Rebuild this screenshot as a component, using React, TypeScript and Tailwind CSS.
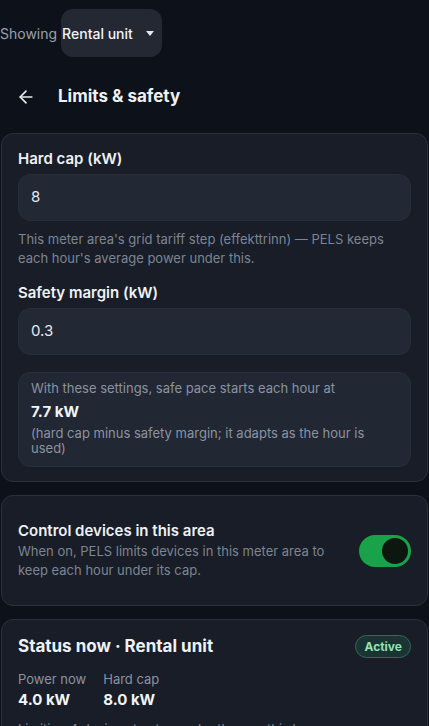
import { ArrowLeft } from 'lucide-react';

function Field({ label, value }: { label: string; value: string }) {
  return (
    <div className="flex flex-col gap-[5px]">
      <label className="text-[15px] font-semibold text-[#eef1f6] leading-5">{label}</label>
      <div className="h-[47px] rounded-xl bg-[#222834] border border-[#272d39] px-3 flex items-center text-[15px] text-[#e6e9ef]">
        {value}
      </div>
    </div>
  );
}

export default function App() {
  return (
    <div
      className="min-h-screen bg-[#0d111a] text-white pb-10"
      style={{ fontFamily: 'Inter, "Noto Sans", sans-serif' }}
    >
      {/* top selector */}
      <div className="flex items-center gap-1 pt-[9px]">
        <span className="text-[14px] text-[#9aa1ad]">Showing</span>
        <button className="h-12 w-[101px] rounded-xl bg-[#232833] flex items-center justify-between pl-[1px] pr-[8px] text-[14px] font-medium text-[#f1f3f7]">
          Rental unit
          <svg width="8" height="5" viewBox="0 0 8 5" className="fill-[#e5e7eb]">
            <path d="M0 0h8L4 5z" />
          </svg>
        </button>
      </div>

      {/* header */}
      <div className="flex items-center h-[40px] mt-[20px] pl-4 gap-[22px]">
        <ArrowLeft size={20} strokeWidth={2} className="text-[#e8ebf0]" />
        <h1 className="text-[17px] font-bold text-[#eef1f6]">Limits &amp; safety</h1>
      </div>

      <div className="px-[1px] mt-[16px] flex flex-col gap-[13px]">
        {/* limits card */}
        <section className="rounded-xl bg-[#181d27] border border-[#2a303c] px-[16px] pt-[15px] pb-[14px]">
          <Field label="Hard cap (kW)" value="8" />
          <p className="text-[13px] leading-[19px] text-[#7d8592] mt-[9px]">
            This meter area's grid tariff step (effekttrinn) — PELS keeps each hour's average power under this.
          </p>
          <div className="mt-[15px]">
            <Field label="Safety margin (kW)" value="0.3" />
          </div>
          <div className="mt-[17px] rounded-xl bg-[#212733] border border-[#272d39] px-3 pt-[6px] pb-[10px]">
            <p className="text-[13px] leading-[19px] text-[#8c93a0]">With these settings, safe pace starts each hour at</p>
            <p className="text-[15px] font-bold text-[#f1f4f8] leading-[28px]">7.7 kW</p>
            <p className="text-[13px] leading-[15px] text-[#8c93a0]">
              (hard cap minus safety margin; it adapts as the hour is used)
            </p>
          </div>
        </section>

        {/* control card */}
        <section className="rounded-xl bg-[#181d27] border border-[#2a303c] px-[16px] pt-[25px] pb-[25px] flex items-center gap-4">
          <div className="flex-1">
            <h2 className="text-[15px] font-semibold text-[#eef1f6] leading-5">Control devices in this area</h2>
            <p className="text-[13px] leading-[19px] text-[#7d8592] mt-[1px]">
              When on, PELS limits devices in this meter area to keep each hour under its cap.
            </p>
          </div>
          <div className="w-[52px] h-[32px] rounded-full bg-[#1aa24a] flex items-center justify-end pr-[3px] shrink-0">
            <div className="w-[26px] h-[26px] rounded-full bg-[#0d1710]" />
          </div>
        </section>

        {/* status card */}
        <section className="rounded-xl bg-[#181d27] border border-[#2a303c] px-[16px] pt-[14px] pb-[20px]">
          <div className="flex items-center justify-between">
            <h2 className="text-[17px] font-bold text-[#eef1f6]">Status now · Rental unit</h2>
            <span className="rounded-full border border-[#2f6b5c] bg-[#1a3333] px-[8px] h-[23px] flex items-center text-[12px] font-bold text-[#8ee6b4]">
              Active
            </span>
          </div>
          <div className="flex gap-[17px] mt-[10px]">
            <div>
              <div className="text-[13px] text-[#8c93a0] leading-[18px]">Power now</div>
              <div className="text-[15px] font-bold text-[#f1f4f8] leading-[24px]">4.0 kW</div>
            </div>
            <div>
              <div className="text-[13px] text-[#8c93a0] leading-[18px]">Hard cap</div>
              <div className="text-[15px] font-bold text-[#f1f4f8] leading-[24px]">8.0 kW</div>
            </div>
          </div>
          <p className="text-[13px] leading-[19px] text-[#7d8592] mt-[8px]">
            Limiting 4 devices to stay under the cap this hour.
          </p>
        </section>
      </div>
    </div>
  );
}
